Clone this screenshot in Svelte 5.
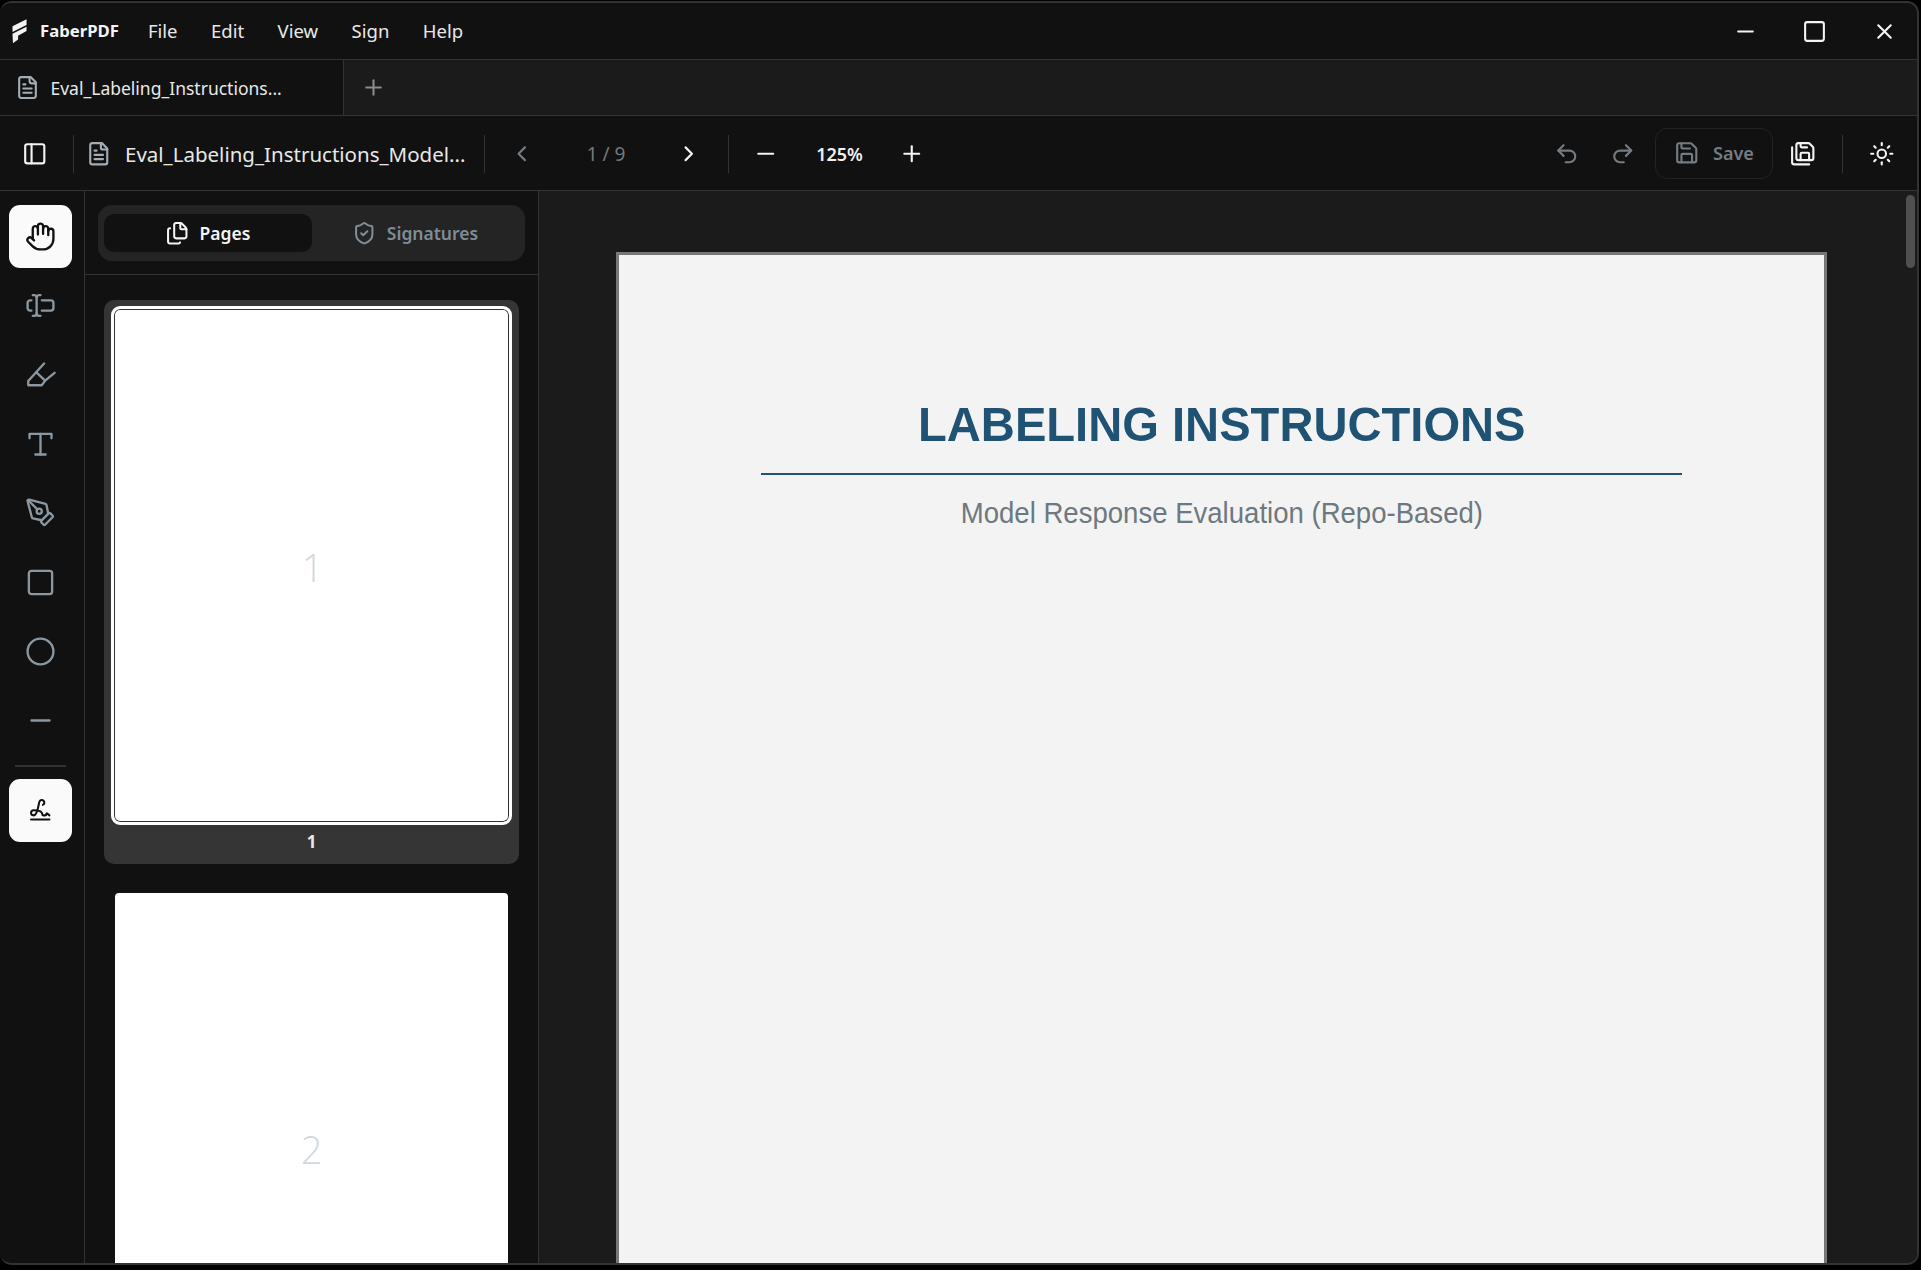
<script>
  const icons = {
    file: ['M15 2H6a2 2 0 0 0-2 2v16a2 2 0 0 0 2 2h12a2 2 0 0 0 2-2V7Z', 'M14 2v4a2 2 0 0 0 2 2h4', 'M10 9H8', 'M16 13H8', 'M16 17H8'],
    panel: ['M5 3h14a2 2 0 0 1 2 2v14a2 2 0 0 1-2 2H5a2 2 0 0 1-2-2V5a2 2 0 0 1 2-2z', 'M9 3v18'],
    left: ['m15 18-6-6 6-6'],
    right: ['m9 18 6-6-6-6'],
    minus: ['M5 12h14'],
    plus: ['M5 12h14', 'M12 5v14'],
    close: ['M18 6 6 18', 'm6 6 12 12'],
    max: ['M5 3h14a2 2 0 0 1 2 2v14a2 2 0 0 1-2 2H5a2 2 0 0 1-2-2V5a2 2 0 0 1 2-2z'],
    undo: ['M9 14 4 9l5-5', 'M4 9h10.5a5.5 5.5 0 0 1 5.5 5.5a5.5 5.5 0 0 1-5.5 5.5H11'],
    redo: ['m15 14 5-5-5-5', 'M20 9H9.5A5.5 5.5 0 0 0 4 14.5A5.5 5.5 0 0 0 9.5 20H13'],
    save: ['M15.2 3a2 2 0 0 1 1.4.6l3.8 3.8a2 2 0 0 1 .6 1.4V19a2 2 0 0 1-2 2H5a2 2 0 0 1-2-2V5a2 2 0 0 1 2-2z', 'M17 21v-7a1 1 0 0 0-1-1H8a1 1 0 0 0-1 1v7', 'M7 3v4a1 1 0 0 0 1 1h7'],
    saveall: ['M10 2v3a1 1 0 0 0 1 1h5', 'M18 18v-6a1 1 0 0 0-1-1h-6a1 1 0 0 0-1 1v6', 'M18 22H4a2 2 0 0 1-2-2V6', 'M8 18a2 2 0 0 1-2-2V4a2 2 0 0 1 2-2h9.172a2 2 0 0 1 1.414.586l2.828 2.828A2 2 0 0 1 22 6.828V16a2 2 0 0 1-2 2z'],
    sun: ['M12 8a4 4 0 1 0 0 8a4 4 0 1 0 0-8z', 'M12 2v2', 'M12 20v2', 'm4.93 4.93 1.41 1.41', 'm17.66 17.66 1.41 1.41', 'M2 12h2', 'M20 12h2', 'm6.34 17.66-1.41 1.41', 'm19.07 4.93-1.41 1.41'],
    hand: ['M18 11V6a2 2 0 0 0-2-2a2 2 0 0 0-2 2', 'M14 10V4a2 2 0 0 0-2-2a2 2 0 0 0-2 2v2', 'M10 10.5V6a2 2 0 0 0-2-2a2 2 0 0 0-2 2v8', 'M18 8a2 2 0 1 1 4 0v6a8 8 0 0 1-8 8h-2c-2.8 0-4.5-.86-5.99-2.34l-3.6-3.6a2 2 0 0 1 2.83-2.82L7 15'],
    cursor: ['M12 20h-1a2 2 0 0 1-2-2 2 2 0 0 1-2 2H6', 'M13 8h7a2 2 0 0 1 2 2v4a2 2 0 0 1-2 2h-7', 'M5 16H4a2 2 0 0 1-2-2v-4a2 2 0 0 1 2-2h1', 'M6 4h1a2 2 0 0 1 2 2 2 2 0 0 1 2-2h1', 'M9 6v12'],
    marker: ['M14.8 3.5 8.6 10.2 2.5 17v3.3H13l2.6-3.6 7.3-6', 'M8.6 10.2 15.6 16.7'],
    type: ['M3.5 8V4.5h17V8', 'M12 4.5v16', 'M8 20.5h8'],
    pen: ['M15.707 21.293a1 1 0 0 1-1.414 0l-1.586-1.586a1 1 0 0 1 0-1.414l5.586-5.586a1 1 0 0 1 1.414 0l1.586 1.586a1 1 0 0 1 0 1.414z', 'm18 13-1.375-6.874a1 1 0 0 0-.746-.776L3.235 2.028a1 1 0 0 0-1.207 1.207L5.35 15.879a1 1 0 0 0 .776.746L13 18', 'm2.3 2.3 7.286 7.286', 'M11 9a2 2 0 1 0 0 4a2 2 0 1 0 0-4z'],
    square: ['M5 3h14a2 2 0 0 1 2 2v14a2 2 0 0 1-2 2H5a2 2 0 0 1-2-2V5a2 2 0 0 1 2-2z'],
    circle: ['M12 2a10 10 0 1 0 0 20a10 10 0 1 0 0-20z'],
    sign: ['m21 17-2.156-1.868A.5.5 0 0 0 18 15.5v.5a1 1 0 0 1-1 1h-2a1 1 0 0 1-1-1c0-2.545-3.991-3.97-8.5-4a1 1 0 0 0 0 5c4.153 0 4.745-11.295 5.708-13.5a2.5 2.5 0 1 1 3.31 3.284', 'M3 21h18'],
    pages: ['M15 2h-4a2 2 0 0 0-2 2v11a2 2 0 0 0 2 2h8a2 2 0 0 0 2-2V8', 'M16.706 2.706A2.4 2.4 0 0 0 15 2v5a1 1 0 0 0 1 1h5a2.4 2.4 0 0 0-.706-1.706z', 'M5 7a2 2 0 0 0-2 2v11a2 2 0 0 0 2 2h8a2 2 0 0 0 1.732-1'],
    shield: ['M20 13c0 5-3.5 7.5-7.66 8.95a1 1 0 0 1-.67-.01C7.5 20.5 4 18 4 13V6a1 1 0 0 1 1-1c2 0 4.5-1.2 6.24-2.72a1.17 1.17 0 0 1 1.52 0C14.51 3.81 17 5 19 5a1 1 0 0 1 1 1z', 'm9 12 2 2 4-4']
  };
  const menus = ['File', 'Edit', 'View', 'Sign', 'Help'];
  const tools = ['cursor', 'marker', 'type', 'pen', 'square', 'circle', 'minus'];
</script>

{#snippet icon(name, cls)}
  <svg class={'ic ' + cls} viewBox="0 0 24 24" fill="none" stroke="currentColor" stroke-linecap="round" stroke-linejoin="round">
    {#each icons[name] as d}<path {d} />{/each}
  </svg>
{/snippet}

<div class="window">
  <header class="titlebar">
    <div class="brand">
      <svg class="logo" viewBox="0 0 16 26" fill="#f2f2f2">
        <path d="M15.5 0V6L0.5 13.5V7.5Z" />
        <path d="M15.5 8V12.5L6.5 17.5V21.5L1 25.5L0.5 15.5Z" />
      </svg>
      <span class="brandname">FaberPDF</span>
    </div>
    <nav class="menus">
      {#each menus as m}<span>{m}</span>{/each}
    </nav>
    <div class="winctl">
      {@render icon('minus', 'w24')}
      {@render icon('max', 'w24')}
      {@render icon('close', 'w24')}
    </div>
  </header>

  <div class="tabrow">
    <div class="tab">
      {@render icon('file', 'w24 muted')}
      <span>Eval_Labeling_Instructions...</span>
    </div>
    <div class="newtab">{@render icon('plus', 'w24')}</div>
  </div>

  <div class="toolbar">
    {@render icon('panel', 't28 white')}
    <i class="vr first"></i>
    <span class="docicon">{@render icon('file', 't28 muted')}</span>
    <span class="docname">Eval_Labeling_Instructions_Model...</span>
    <i class="vr second"></i>
    <span class="prev">{@render icon('left', 't28 dim')}</span>
    <span class="pageno">1 / 9</span>
    {@render icon('right', 't28 white')}
    <i class="vr third"></i>
    <span class="prev">{@render icon('minus', 't28 white')}</span>
    <span class="zoomval">125%</span>
    {@render icon('plus', 't28 white')}
    <div class="tb-right">
      <div class="history">
        {@render icon('undo', 't28 dim')}
        {@render icon('redo', 't28 dim')}
      </div>
      <button class="savebtn">{@render icon('save', 't28')}<span>Save</span></button>
      {@render icon('saveall', 't28 white')}
      <i class="vr fourth"></i>
      {@render icon('sun', 't28 white')}
    </div>
  </div>

  <div class="body">
    <aside class="rail">
      <div class="tool on">{@render icon('hand', 'r31')}</div>
      {#each tools as t}
        <div class="tool">{@render icon(t, 'r31')}</div>
      {/each}
      <hr class="railsep" />
      <div class="tool on">{@render icon('sign', 'r26')}</div>
    </aside>

    <aside class="panel">
      <div class="panelhead">
        <div class="seg">
          <div class="seg-item active">{@render icon('pages', 'w26')}<span>Pages</span></div>
          <div class="seg-item">{@render icon('shield', 'w26')}<span>Signatures</span></div>
        </div>
      </div>
      <div class="thumbs">
        <div class="card">
          <div class="thumb selected"><span>1</span></div>
          <div class="cardlabel">1</div>
        </div>
        <div class="thumb plain"><span>2</span></div>
      </div>
    </aside>

    <main class="viewer">
      <div class="scrollarea">
        <article class="page">
          <h1><span>LABELING INSTRUCTIONS</span></h1>
          <p><span>Model Response Evaluation (Repo-Based)</span></p>
        </article>
      </div>
      <div class="track"><div class="scrollthumb"></div></div>
    </main>
  </div>
</div>

<style>
  :global(body) {
    margin: 0;
    background: #000;
  }
  .window {
    box-sizing: border-box;
    width: 1919px;
    height: 1264px;
    margin-top: 1px;
    display: flex;
    flex-direction: column;
    overflow: hidden;
    background: #111;
    border: 2px solid #333;
    border-left: 0;
    border-radius: 12px;
    font-family: "Noto Sans", "Open Sans", sans-serif;
    color: #ececec;
  }
  .ic { display: block; flex: none; stroke-width: 2; }
  .w24 { width: 25px; height: 25px; }
  .w26 { width: 24.5px; height: 24.5px; }
  .t28 { width: 25.5px; height: 25.5px; margin: 1.25px; }
  .r31 { width: 31px; height: 31px; stroke-width: 1.8; }
  .r26 { width: 24.5px; height: 24.5px; stroke-width: 2; }
  .white { color: #f4f4f4; }
  .muted { color: #a3adb5; }
  .dim { color: #747c82; }

  .titlebar {
    height: 57px;
    flex: none;
    display: flex;
    align-items: center;
    background: #111;
    border-bottom: 1px solid #333;
    box-sizing: border-box;
  }
  .brand { display: flex; align-items: center; padding-left: 12px; }
  .logo { width: 15px; height: 25px; display: block; }
  .brandname { margin: 0 0 2px 13px; font-size: 16.7px; font-weight: 700; color: #f4f4f4; }
  .menus { display: flex; gap: 33.5px; margin-left: 29px; padding-bottom: 2px; font-size: 18.5px; color: #e8e8e8; }
  .winctl { margin-left: auto; display: flex; gap: 44.5px; padding-right: 20.5px; color: #f4f4f4; }

  .tabrow {
    height: 56px;
    flex: none;
    box-sizing: border-box;
    display: flex;
    background: #1b1b1b;
    border-bottom: 1px solid #333;
  }
  .tab {
    width: 344px;
    box-sizing: border-box;
    display: flex;
    align-items: center;
    gap: 10.5px;
    padding-left: 15px;
    background: #111;
    border-right: 1px solid #333;
    font-size: 17.5px;
    color: #e8e8e8;
  }
  .newtab { display: flex; align-items: center; padding-left: 17px; color: #8c8c8c; }

  .toolbar {
    height: 75px;
    flex: none;
    box-sizing: border-box;
    display: flex;
    align-items: center;
    padding: 1px 0 0 20.5px;
    background: #111;
    border-bottom: 1px solid #333;
  }
  .vr { display: block; flex: none; width: 1px; height: 38px; background: #333; }
  .vr.first { margin-left: 24.5px; }
  .docicon { margin-left: 11px; }
  .docname { margin-left: 12px; width: 339px; font-size: 20.5px; white-space: nowrap; color: #e8e8e8; }
  .vr.second { margin-left: 20px; }
  .prev { margin-left: 23px; }
  .pageno { width: 139px; padding-left: 1px; box-sizing: border-box; text-align: center; font-size: 19px; color: #777; }
  .vr.third { margin-left: 25px; }
  .zoomval { width: 118px; padding-left: 1px; box-sizing: border-box; text-align: center; font-size: 18px; font-weight: 600; color: #f0f0f0; }
  .tb-right { margin-left: auto; display: flex; align-items: center; padding-right: 21px; }
  .history { display: flex; gap: 28px; }
  .savebtn {
    width: 118px;
    height: 51px;
    margin: -1px 16px 0 18px;
    padding: 0 0 0 17px;
    box-sizing: border-box;
    display: flex;
    align-items: center;
    gap: 12px;
    background: transparent;
    border: 1px solid #232323;
    border-radius: 12px;
    color: #747c82;
    font: 600 18px "Noto Sans", sans-serif;
  }
  .vr.fourth { margin: 0 25px; }

  .body { flex: 1; min-height: 0; display: flex; }
  .rail {
    width: 85px;
    flex: none;
    box-sizing: border-box;
    display: flex;
    flex-direction: column;
    align-items: center;
    gap: 6px;
    padding: 14px 4px 0 0;
    border-right: 1px solid #333;
    background: #111;
  }
  .tool {
    width: 63px;
    height: 63px;
    flex: none;
    display: flex;
    align-items: center;
    justify-content: center;
    border-radius: 11px;
    color: #8b98a2;
  }
  .tool:nth-child(6) { margin-top: 1px; }
  .tool.on { background: #fafafa; color: #111; }
  .railsep {
    width: 51px;
    height: 2px;
    margin: 7px 0 6px;
    border: 0;
    background: #333;
  }

  .panel {
    width: 454px;
    flex: none;
    box-sizing: border-box;
    overflow: hidden;
    background: #111;
    border-right: 1px solid #333;
  }
  .panelhead {
    padding: 14px 13px 13px;
    border-bottom: 1px solid #333;
  }
  .seg {
    height: 56px;
    box-sizing: border-box;
    padding: 9px 6px;
    display: flex;
    background: #242424;
    border-radius: 14px;
  }
  .seg-item {
    flex: 1;
    display: flex;
    align-items: center;
    justify-content: center;
    gap: 10px;
    font-size: 17.5px;
    font-weight: 600;
    color: #7e8c97;
    border-radius: 10px;
  }
  .seg-item.active { background: #111; color: #f4f4f4; }

  .thumbs {
    display: flex;
    flex-direction: column;
    align-items: center;
    gap: 29px;
    padding-top: 25px;
  }
  .card {
    width: 415px;
    box-sizing: border-box;
    padding: 6px 7px 0;
    background: #353535;
    border-radius: 10px;
  }
  .cardlabel {
    height: 39px;
    box-sizing: border-box;
    padding-bottom: 7px;
    display: flex;
    align-items: center;
    justify-content: center;
    font-size: 17px;
    font-weight: 700;
    color: #e8e8e8;
  }
  .thumb {
    box-sizing: border-box;
    display: flex;
    align-items: center;
    justify-content: center;
    background: #fff;
    font-family: "Open Sans", "Noto Sans", sans-serif;
    font-size: 38px;
    font-weight: 300;
    color: #d3d8dd;
  }
  .thumb.selected {
    height: 519px;
    padding: 2px 0 0 2px;
    border: 3px solid #fff;
    border-radius: 9px;
    box-shadow: inset 0 0 0 1px #333;
  }
  .thumb.plain {
    width: 393px;
    height: 512px;
    flex: none;
    border-radius: 4px;
  }

  .viewer { flex: 1; min-width: 0; display: flex; background: #1b1b1b; overflow: hidden; }
  .scrollarea { flex: 1; min-width: 0; display: flex; justify-content: center; padding-top: 61px; overflow: hidden; }
  .page {
    width: 1211px;
    flex: none;
    box-sizing: border-box;
    border: 3px solid #777;
    border-bottom: 0;
    background: #f3f3f3;
    padding: 142px 142px 0;
    font-family: "Liberation Sans", Arial, sans-serif;
    text-align: center;
  }
  .page h1 {
    margin: 0;
    padding-bottom: 22px;
    font-size: 49px;
    line-height: 54px;
    font-weight: 700;
    color: #1f5273;
    border-bottom: 2px solid #1f5273;
  }
  .page h1 span { display: inline-block; white-space: nowrap; transform: scaleX(0.962); }
  .page p {
    margin: 20px 0 0;
    font-size: 29px;
    line-height: 36px;
    color: #6d7880;
  }
  .page p span { display: inline-block; white-space: nowrap; transform: scaleX(0.95); }
  .track { width: 13px; flex: none; }
  .scrollthumb {
    width: 9px;
    height: 73px;
    margin: 4px 0 0 2px;
    border-radius: 5px;
    background: #4f4f4f;
  }
</style>
